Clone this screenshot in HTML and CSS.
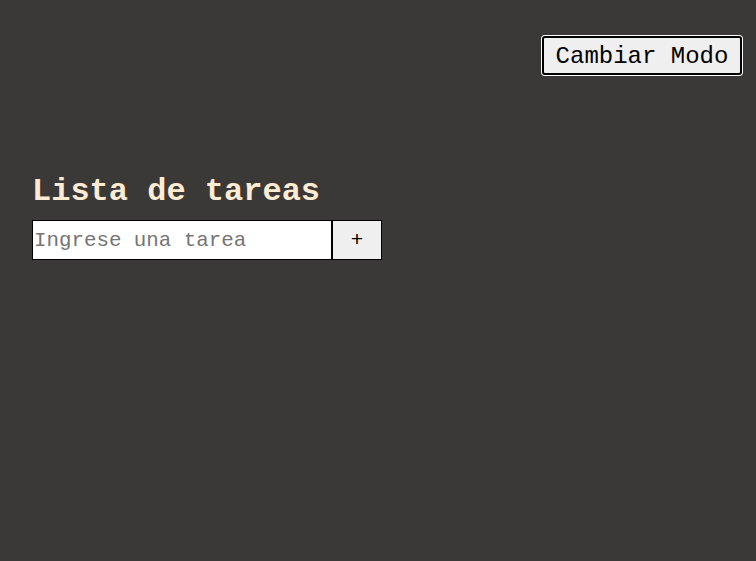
FILE: index.html
```html
<!DOCTYPE html>
<html lang="es">
<head>
<meta charset="utf-8">
<title>Lista de tareas</title>
<link rel="stylesheet" href="styles.css">
</head>
<body>
<header class="top">
  <button class="mode-btn">Cambiar Modo</button>
</header>
<main class="app">
  <h1 class="title">Lista de tareas</h1>
  <form class="add-form" onsubmit="return false">
    <input class="task-input" type="text" placeholder="Ingrese una tarea">
    <button class="add-btn" type="submit">+</button>
  </form>
</main>
</body>
</html>
```
FILE: styles.css
```css
html, body {
  margin: 0;
  height: 100%;
}
body {
  background: #3b3937;
  font-family: "Liberation Mono", "Courier New", monospace;
}
.top {
  display: flex;
  justify-content: flex-end;
  padding: 36px 14px 0 0;
}
.mode-btn {
  box-sizing: border-box;
  font-family: inherit;
  font-size: 24px;
  color: #000;
  background: #efefef;
  border: 2px solid #000;
  border-radius: 3px;
  box-shadow: 0 0 0 1px #fff;
  height: 39px;
  width: 200px;
  padding: 1px 0 0;
  cursor: pointer;
}
.app {
  padding: 0 32px;
  margin-top: 99px;
}
.title {
  margin: 0 0 10px;
  font-size: 32px;
  font-weight: bold;
  color: #fdebd3;
  line-height: 36px;
}
.add-form {
  display: flex;
}
.task-input {
  box-sizing: border-box;
  width: 301px;
  height: 40px;
  margin: 0;
  border: 1px solid #000;
  border-right-width: 2px;
  padding: 0 1px;
  font-family: inherit;
  font-size: 20.8px;
  background: #fff;
  outline: none;
}
.task-input::placeholder {
  color: #757575;
}
.add-btn {
  box-sizing: border-box;
  width: 49px;
  height: 40px;
  margin: 0;
  border: 1px solid #000;
  border-left: none;
  background: #efefef;
  font-family: inherit;
  font-size: 20.8px;
  color: #000;
  padding: 0;
}
```
